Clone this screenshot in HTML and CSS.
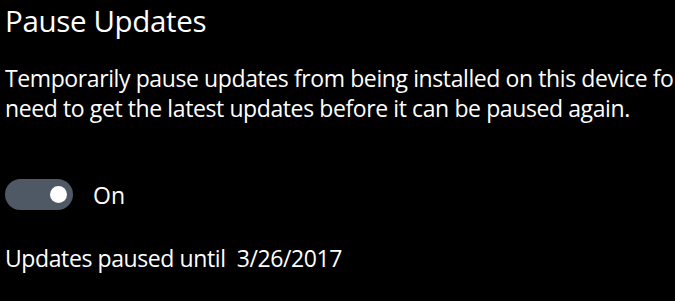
FILE: index.html
```html
<!DOCTYPE html>
<html lang="en">
<head>
<meta charset="utf-8">
<title>Pause Updates</title>
<link rel="stylesheet" href="styles.css">
</head>
<body>
<main class="panel">
  <h1 class="title">Pause Updates</h1>
  <p class="desc"><span class="line">Temporarily pause updates from being installed on this device for 35 days. When updates resume, this device will</span><span class="line">need to get the latest updates before it can be paused again.</span></p>
  <div class="toggle-row">
    <div class="toggle"><span class="knob"></span></div>
    <span class="toggle-label">On</span>
  </div>
  <p class="status">Updates paused until&nbsp; 3/26/2017</p>
</main>
</body>
</html>
```
FILE: styles.css
```css
html, body {
  margin: 0;
  padding: 0;
  background: #000;
  overflow: hidden;
}
.panel {
  width: 675px;
  height: 301px;
  padding: 0 0 0 5px;
  box-sizing: border-box;
  color: #fff;
  font-family: "Open Sans", "Noto Sans", sans-serif;
  overflow: hidden;
}
.title {
  margin: 0;
  font-size: 29.5px;
  font-weight: 400;
  line-height: 41px;
  letter-spacing: -0.35px;
  white-space: nowrap;
}
.desc {
  margin: 22px 0 0;
  font-size: 23px;
  line-height: 30px;
  letter-spacing: -0.4px;
  overflow: hidden;
}
.line {
  display: block;
  white-space: nowrap;
}
.toggle-row {
  display: flex;
  align-items: center;
  margin-top: 56px;
  gap: 20px;
}
.toggle {
  width: 68px;
  height: 31px;
  border-radius: 16px;
  background: #4f5966;
  display: flex;
  align-items: center;
  justify-content: flex-end;
  padding-right: 6px;
  box-sizing: border-box;
}
.knob {
  width: 17px;
  height: 17px;
  border-radius: 50%;
  background: #fff;
}
.toggle-label {
  font-size: 23px;
  line-height: 30px;
}
.status {
  margin: 33px 0 0;
  font-size: 23px;
  line-height: 30px;
  letter-spacing: -0.4px;
  white-space: nowrap;
}
```
